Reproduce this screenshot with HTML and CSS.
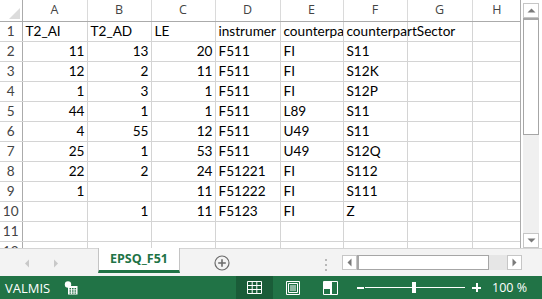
FILE: index.html
```html
<!DOCTYPE html>
<html>
<head>
<meta charset="utf-8">
<link rel="stylesheet" href="styles.css">
</head>
<body>
<div class="app">
  <div class="sheet">
    <div class="gridwrap">
      <table class="grid">
        <colgroup>
          <col class="c-rh"><col class="c-a"><col class="c-b"><col class="c-c"><col class="c-d"><col class="c-e"><col class="c-f"><col class="c-g"><col class="c-h">
        </colgroup>
        <thead>
          <tr class="hdr">
            <th class="corner"><svg width="12" height="12" viewBox="0 0 12 12"><polygon points="12,1 12,12 1,12" fill="#dcdcdc"/></svg></th>
            <th>A</th><th>B</th><th>C</th><th>D</th><th>E</th><th>F</th><th>G</th><th class="last">H</th>
          </tr>
        </thead>
        <tbody>
          <tr><th>1</th><td>T2_AI</td><td>T2_AD</td><td>LE</td><td class="clip">instrumer</td><td class="clip">counterpa</td><td class="ov">counterpartSector</td><td></td><td></td></tr>
          <tr><th>2</th><td class="n">11</td><td class="n">13</td><td class="n">20</td><td>F511</td><td>FI</td><td>S11</td><td></td><td></td></tr>
          <tr><th>3</th><td class="n">12</td><td class="n">2</td><td class="n">11</td><td>F511</td><td>FI</td><td>S12K</td><td></td><td></td></tr>
          <tr><th>4</th><td class="n">1</td><td class="n">3</td><td class="n">1</td><td>F511</td><td>FI</td><td>S12P</td><td></td><td></td></tr>
          <tr><th>5</th><td class="n">44</td><td class="n">1</td><td class="n">1</td><td>F511</td><td>L89</td><td>S11</td><td></td><td></td></tr>
          <tr><th>6</th><td class="n">4</td><td class="n">55</td><td class="n">12</td><td>F511</td><td>U49</td><td>S11</td><td></td><td></td></tr>
          <tr><th>7</th><td class="n">25</td><td class="n">1</td><td class="n">53</td><td>F511</td><td>U49</td><td>S12Q</td><td></td><td></td></tr>
          <tr><th>8</th><td class="n">22</td><td class="n">2</td><td class="n">24</td><td>F51221</td><td>FI</td><td>S112</td><td></td><td></td></tr>
          <tr><th>9</th><td class="n">1</td><td class="n"></td><td class="n">11</td><td>F51222</td><td>FI</td><td>S111</td><td></td><td></td></tr>
          <tr><th>10</th><td class="n"></td><td class="n">1</td><td class="n">11</td><td>F5123</td><td>FI</td><td>Z</td><td></td><td></td></tr>
          <tr><th>11</th><td></td><td></td><td></td><td></td><td></td><td></td><td></td><td></td></tr>
          <tr><th>12</th><td></td><td></td><td></td><td></td><td></td><td></td><td></td><td></td></tr>
        </tbody>
      </table>
    </div>
    <div class="vscroll">
      <div class="vbtn up"><svg width="9" height="5" viewBox="0 0 9 5"><polygon points="0.5,4.5 8.5,4.5 4.5,0.5" fill="#7a7a7a"/></svg></div>
      <div class="vthumb"></div>
      <div class="vtrack"></div>
      <div class="vbtn down"><svg width="9" height="5" viewBox="0 0 9 5"><polygon points="0.5,0.5 8.5,0.5 4.5,4.5" fill="#7a7a7a"/></svg></div>
    </div>
  </div>
  <div class="tabbar">
    <div class="navs">
      <svg width="6" height="9" viewBox="0 0 6 9"><polygon points="5,0.5 5,8.5 1,4.5" fill="#c8c8c8"/></svg>
      <svg width="6" height="9" viewBox="0 0 6 9"><polygon points="1,0.5 1,8.5 5,4.5" fill="#c8c8c8"/></svg>
    </div>
    <div class="tab">EPSQ_F51</div>
    <div class="addsheet">
      <svg width="16" height="16" viewBox="0 0 16 16"><circle cx="8" cy="8" r="7" fill="none" stroke="#6b6b6b" stroke-width="1.2"/><path d="M8 4.2v7.6M4.2 8h7.6" stroke="#6b6b6b" stroke-width="1.6"/></svg>
    </div>
    <div class="split"><span></span><span></span><span></span></div>
    <div class="hscroll">
      <div class="hbtn"><svg width="5" height="9" viewBox="0 0 5 9"><polygon points="4.5,0.5 4.5,8.5 0.5,4.5" fill="#7a7a7a"/></svg></div>
      <div class="hthumb"></div>
      <div class="htrack"></div>
      <div class="hbtn"><svg width="5" height="9" viewBox="0 0 5 9"><polygon points="0.5,0.5 0.5,8.5 4.5,4.5" fill="#7a7a7a"/></svg></div>
    </div>
  </div>
  <div class="status">
    <span class="ready">VALMIS</span>
    <span class="macro"><svg width="14" height="14" viewBox="0 0 14 14"><circle cx="4" cy="3.5" r="3.2" fill="#fff"/><rect x="4" y="5" width="9.5" height="8.5" fill="#fff"/><g fill="#217346"><rect x="5.5" y="7" width="1.6" height="1.4"/><rect x="8" y="7" width="1.6" height="1.4"/><rect x="10.5" y="7" width="1.6" height="1.4"/><rect x="5.5" y="9.3" width="1.6" height="1.4"/><rect x="8" y="9.3" width="1.6" height="1.4"/><rect x="10.5" y="9.3" width="1.6" height="1.4"/><rect x="5.5" y="11.5" width="1.6" height="1.2"/><rect x="8" y="11.5" width="1.6" height="1.2"/><rect x="10.5" y="11.5" width="1.6" height="1.2"/></g></svg></span>
    <span class="view v-normal"><svg width="15" height="13" viewBox="0 0 15 13"><path d="M0.5 0.5h14v12h-14zM0.5 4.5h14M0.5 8.5h14M5.2 0.5v12M9.8 0.5v12" fill="none" stroke="#fff" stroke-width="1"/></svg></span>
    <span class="view v-layout"><svg width="14" height="14" viewBox="0 0 14 14"><path d="M0.5 0.5h13v13h-13z" fill="none" stroke="#fff"/><path d="M2.5 2.5h9v9h-9z" fill="none" stroke="#fff"/><path d="M4 5h6M4 7h6M4 9h6" stroke="#fff"/></svg></span>
    <span class="view v-break"><svg width="15" height="14" viewBox="0 0 15 14"><path d="M0.5 0.5h14v13h-14z" fill="none" stroke="#fff"/><rect x="1" y="1" width="6" height="7" fill="#fff"/><rect x="7" y="1" width="2" height="12" fill="#fff"/></svg></span>
    <span class="minus"></span>
    <span class="slider"><span class="knob"></span></span>
    <span class="plus"></span>
    <span class="pct">100 %</span>
  </div>
</div>
</body>
</html>
```
FILE: styles.css
```css
* { box-sizing: border-box; }
html, body { margin: 0; padding: 0; }
body { width: 542px; height: 299px; overflow: hidden; background: #fff; font-family: "Lato", "Liberation Sans", sans-serif; }
.app { display: flex; flex-direction: column; width: 542px; height: 299px; }

.sheet { display: flex; height: 248px; overflow: hidden; background: #fff; }
.gridwrap { width: 521px; height: 248px; overflow: hidden; border-right: 1px solid #ababab; }
.grid { border-collapse: collapse; table-layout: fixed; width: 521px; font-size: 13.6px; color: #000; }
.c-rh { width: 22px; } .c-a { width: 65px; } .c-b { width: 64px; } .c-c { width: 64px; }
.c-d { width: 65px; } .c-e { width: 63px; } .c-f { width: 64px; } .c-g { width: 65px; } .c-h { width: 49px; }
.grid th, .grid td { height: 20px; padding: 0 2px 0 3px; border: 1px solid #d4d4d4; white-space: nowrap; overflow: hidden; line-height: 18px; }
.grid thead th { height: 21px; font-weight: normal; color: #444; font-family: "Open Sans", sans-serif; font-size: 12.5px; text-align: center; border-top: none; border-color: #dadada; border-bottom-color: #ababab; background: #fff; padding: 0; }
.grid thead th.corner { text-align: right; vertical-align: bottom; padding: 0 2px 2px 0; line-height: 0; border-right-color: #ababab; border-left: none; }
.grid thead th.last { border-right: none; }
.grid tbody th { font-weight: normal; color: #444; text-align: center; border-left: none; border-right: 1px solid #ababab; padding: 0; font-size: 13.6px; }
.grid td:last-child { border-right: none; }
.grid td.n { text-align: right; }
.grid td.clip { text-overflow: clip; }
.grid td.ov { overflow: visible; }

.vscroll { width: 21px; height: 248px; display: flex; flex-direction: column; padding: 3px 3px 0 2px; background: #fff; }
.vbtn { height: 15px; border: 1px solid #c6c6c6; background: #fff; display: flex; align-items: center; justify-content: center; flex: none; }
.vthumb { height: 117px; border: 1px solid #a6a6a6; border-top-width: 2px; background: #fff; flex: none; }
.vtrack { flex: 1; background: #f0f0f0; }

.tabbar { height: 28px; background: #f3f3f3; display: flex; align-items: flex-start; border-top: 1px solid #d4d4d4; }
.navs { width: 98px; display: flex; gap: 23px; padding: 10px 0 0 24px; }
.tab { width: 82px; height: 25px; margin-top: -1px; background: #fff; border-left: 1px solid #c4c4c4; border-right: 1px solid #c4c4c4; border-bottom: 3px solid #217346; color: #217346; font-family: "Open Sans", sans-serif; font-weight: bold; font-size: 12.5px; text-align: center; line-height: 21px; }
.addsheet { width: 82px; padding: 6px 0 0 34px; }
.split { display: flex; flex-direction: column; gap: 3px; padding: 10px 0 0 63px; width: 82px; }
.split span { width: 2px; height: 2px; background: #b8b8b8; }
.hscroll { display: flex; margin-top: 6px; height: 15px; margin-left: -2px; }
.hbtn { width: 15px; height: 15px; border: 1px solid #c6c6c6; background: #fff; display: flex; align-items: center; justify-content: center; }
.hthumb { width: 132px; border: 1px solid #a6a6a6; border-left-width: 2px; background: #fff; }
.htrack { width: 18px; background: #e6e6e6; }

.status { height: 23px; background: #217346; color: #fff; display: flex; align-items: center; font-family: "Open Sans", sans-serif; font-size: 13px; }
.status > span { flex: none; }
.ready { padding-left: 5px; width: 64px; }
.macro { display: flex; align-items: center; width: 14px; }
.view { display: flex; align-items: center; justify-content: center; height: 23px; }
.v-normal { background: #1a5c38; width: 37px; margin-left: 158px; }
.v-layout { width: 14px; margin-left: 13px; }
.v-break { width: 15px; margin-left: 23px; }
.minus { width: 7px; height: 2px; background: #fff; margin-left: 19px; }
.slider { position: relative; width: 100px; height: 1px; background: #fff; margin-left: 1px; }
.knob { position: absolute; left: 47px; top: -5px; width: 4px; height: 11px; background: #fff; }
.plus { position: relative; width: 9px; height: 9px; margin-left: 7px; }
.plus::before { content: ""; position: absolute; left: 0; top: 3.5px; width: 9px; height: 2px; background: #fff; }
.plus::after { content: ""; position: absolute; left: 3.5px; top: 0; width: 2px; height: 9px; background: #fff; }
.pct { margin-left: 11px; font-size: 12.5px; }
```
